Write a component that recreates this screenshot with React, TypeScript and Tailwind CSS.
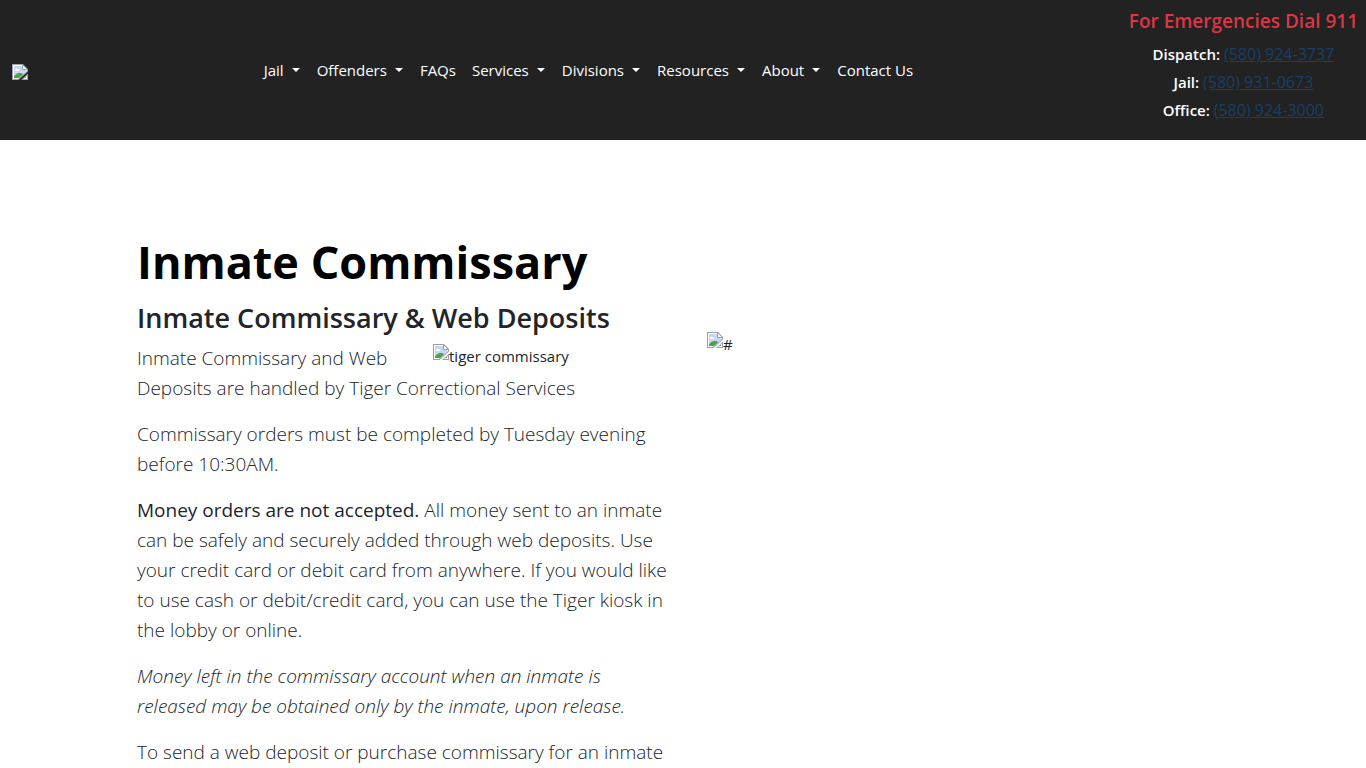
import React from 'react';

interface NavItem {
  label: string;
  hasMenu: boolean;
}

interface Contact {
  label: string;
  phone: string;
}

const navItems: NavItem[] = [
  { label: 'Jail', hasMenu: true },
  { label: 'Offenders', hasMenu: true },
  { label: 'FAQs', hasMenu: false },
  { label: 'Services', hasMenu: true },
  { label: 'Divisions', hasMenu: true },
  { label: 'Resources', hasMenu: true },
  { label: 'About', hasMenu: true },
  { label: 'Contact Us', hasMenu: false },
];

const contacts: Contact[] = [
  { label: 'Dispatch:', phone: '(580) 924-3737' },
  { label: 'Jail:', phone: '(580) 931-0673' },
  { label: 'Office:', phone: '(580) 924-3000' },
];

const MissingImage: React.FC = () => (
  <svg className="w-4 h-4 shrink-0" viewBox="0 0 16 16" aria-hidden="true">
    <path d="M0 0H11L16 5V7.5L6.5 16H0Z" fill="#9b9fa8" />
    <path d="M1 1H10.5L15 5.5V7L6 15H1Z" fill="#fff" />
    <path d="M2 2H10V6H14V8L7 14H2Z" fill="#c6d6f6" />
    <path d="M3 6.5C3 5 4.5 4.5 5.5 5C7 4.5 8 6.5 7 7H3.5C2.5 7 2.5 6.5 3 6.5Z" fill="#fff" />
    <path d="M2 14V12.5C3.5 10 6 8.5 8.5 9C9.5 9 10.5 9.5 11 10.5L7 14Z" fill="#50a348" />
    <path d="M10.5 0.5V5.5H15.5Z" fill="#fff" stroke="#9b9fa8" />
    <path d="M9 16L16 9.5V16Z" fill="#9b9fa8" />
    <path d="M11 15L15 11.5V15Z" fill="#fff" />
    <path d="M12 14H14V12.5Z" fill="#50a348" />
  </svg>
);

const Caret: React.FC = () => (
  <svg className="w-2 h-1 ml-2 mr-px" viewBox="0 0 8 4" aria-hidden="true">
    <path d="M0 0H8L4 4Z" fill="currentColor" />
  </svg>
);

const Header: React.FC = () => {
  return (
    <header className="bg-[#222] flex items-center justify-between pl-3 pr-2 min-h-[140px]">
      <a href="#" aria-label="Home" className="mr-5 mt-1">
        <MissingImage />
      </a>
      <nav>
        <ul className="flex items-center text-[15px] leading-6 text-white">
          {navItems.map((item) => (
            <li key={item.label}>
              <a href="#" className="flex items-center p-2">
                {item.label}
                {item.hasMenu && <Caret />}
              </a>
            </li>
          ))}
        </ul>
      </nav>
      <div className="text-center text-white self-start pt-2">
        <h5 className="text-[19px] leading-[26px] font-semibold text-[#dc3545] mb-1.5">For Emergencies Dial 911</h5>
        {contacts.map((contact) => (
          <p key={contact.label} className="text-[15px] leading-7">
            <strong className="font-semibold">{contact.label}</strong>{' '}
            <a href="#" className="text-base leading-7 text-[#193f66] underline">{contact.phone}</a>
          </p>
        ))}
      </div>
    </header>
  );
};

const App: React.FC = () => {
  return (
    <div className="bg-white text-[#212529] font-['Open_Sans','Noto_Sans',sans-serif]">
      <Header />
      <main className="max-w-[1140px] mx-auto pt-24 grid grid-cols-2">
        <section className="px-6">
          <h1 className="text-[45px] leading-[52px] font-bold text-black mb-3">Inmate Commissary</h1>
          <h2 className="text-[27px] leading-9 font-semibold mb-[7px]">Inmate Commissary &amp; Web Deposits</h2>
          <div className="float-right flex w-[226px] ml-6 pt-px text-[15px] leading-6">
            <MissingImage />
            <span>tiger commissary</span>
          </div>
          <div className="-mr-3 text-[19px] leading-[30px] font-light space-y-4">
            <p>Inmate Commissary and Web Deposits are handled by Tiger Correctional Services</p>
            <p>Commissary orders must be completed by Tuesday evening before 10:30AM.</p>
            <p>
              <strong className="font-medium">Money orders are not accepted.</strong> All money sent to an inmate can be
              safely and securely added through web deposits. Use your credit card or debit card from anywhere. If you
              would like to use cash or debit/credit card, you can use the Tiger kiosk in the lobby or online.
            </p>
            <p>
              <em>
                Money left in the commissary account when an inmate is released may be obtained only by the inmate, upon
                release.
              </em>
            </p>
            <p>To send a web deposit or purchase commissary for an inmate</p>
          </div>
        </section>
        <section className="px-6 pt-24">
          <div className="flex text-[15px] leading-6">
            <MissingImage />
            <span>#</span>
          </div>
        </section>
      </main>
    </div>
  );
};

export default App;
